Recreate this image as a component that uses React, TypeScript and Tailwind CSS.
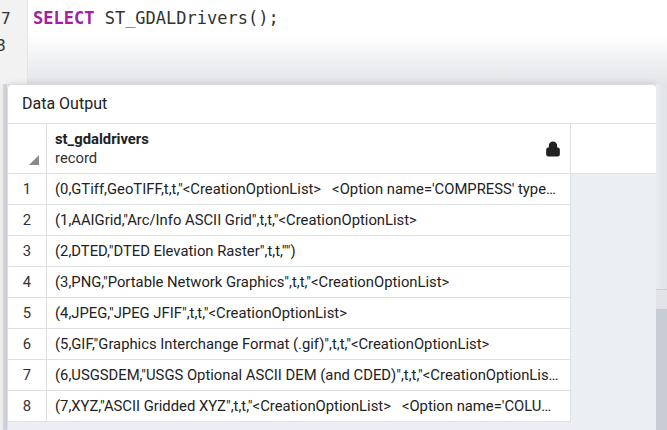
import { Lock } from 'lucide-react';

const rows = [
  `(0,GTiff,GeoTIFF,t,t,"<CreationOptionList>   <Option name='COMPRESS' type…`,
  `(1,AAIGrid,"Arc/Info ASCII Grid",t,t,"<CreationOptionList>`,
  `(2,DTED,"DTED Elevation Raster",t,t,"")`,
  `(3,PNG,"Portable Network Graphics",t,t,"<CreationOptionList>`,
  `(4,JPEG,"JPEG JFIF",t,t,"<CreationOptionList>`,
  `(5,GIF,"Graphics Interchange Format (.gif)",t,t,"<CreationOptionList>`,
  `(6,USGSDEM,"USGS Optional ASCII DEM (and CDED)",t,t,"<CreationOptionLis…`,
  `(7,XYZ,"ASCII Gridded XYZ",t,t,"<CreationOptionList>   <Option name='COLU…`,
];

function Editor() {
  return (
    <div className="flex h-[84px] bg-gradient-to-b from-white from-40% to-[#e3e5e9]">
      <div className="w-[28px] shrink-0 overflow-hidden border-r border-[#e2e2e2] bg-[#f2f2f2] pt-[5px] font-['DejaVu_Sans_Mono',monospace] text-[16px] leading-[27px] text-[#333]">
        <div className="ml-[1px]">7</div>
        <div className="-ml-[4px]">8</div>
      </div>
      <div className="pl-[5px] pt-[5px] font-['DejaVu_Sans_Mono',monospace] text-[17px] leading-[27px] text-[#333]">
        <span className="font-bold text-[#a0209f]">SELECT</span> ST_GDALDrivers();
      </div>
    </div>
  );
}

export default function App() {
  return (
    <div className="h-[430px] w-[667px] overflow-hidden bg-[#e9ebef] font-['Roboto',sans-serif]">
      <Editor />
      <div className="flex h-[346px]">
        <div className="flex w-[8px] shrink-0 bg-[#eeeeee]">
          <div className="ml-[3px] h-full w-[4px] bg-[#d3d6dc]" />
        </div>
        <div className="flex w-[648px] shrink-0 flex-col overflow-hidden rounded-t-[4px] border-t border-[#d8dbe0] bg-white shadow-[0_0_6px_rgba(0,0,0,0.15)]">
          <div className="flex h-[39px] shrink-0 items-center border-b border-[#dde0e5] px-[14px] text-[16px] text-[#222]">
            Data Output
          </div>
          <div className="flex flex-1 flex-col bg-[#ebeef3]">
            <div className="flex h-[50px] shrink-0 border-b border-[#dde0e5] bg-white">
              <div className="relative w-[39px] shrink-0 border-r border-[#dde0e5]">
                <svg className="absolute bottom-[8px] right-[7px]" width="10" height="10" viewBox="0 0 10 10">
                  <polygon points="10,0 10,10 0,10" fill="#8a8a8a" />
                </svg>
              </div>
              <div className="flex w-[524px] shrink-0 items-center justify-between border-r border-[#dde0e5] pl-[8px] pr-[9px]">
                <div className="text-[14.8px] leading-[19px] text-[#222]">
                  <div className="font-bold">st_gdaldrivers</div>
                  <div className="text-[#333]">record</div>
                </div>
                <Lock size={16} strokeWidth={2.6} className="fill-[#222] text-[#222]" />
              </div>
            </div>
            {rows.map((text, i) => (
              <div key={i} className="flex h-[31px] shrink-0">
                <div className="flex w-[39px] shrink-0 items-center justify-center border-b border-r border-[#dde0e5] bg-white text-[14.8px] text-[#333]">
                  {i + 1}
                </div>
                <div className="flex w-[524px] shrink-0 items-center overflow-hidden border-b border-r border-[#dde0e5] bg-white pl-[8px] pr-[6px] text-[14.8px] text-[#222]">
                  <span className="truncate whitespace-pre">{text}</span>
                </div>
              </div>
            ))}
          </div>
        </div>
        <div className="flex w-[11px] shrink-0 flex-col bg-[#e2e4e9]">
          <div className="h-[205px] bg-gradient-to-r from-[#e9ebef] to-[#dfe2e7]" />
          <div className="h-[20px] border-t border-[#c9ccd3] bg-[#e1e3e8]" />
          <div className="flex-1 bg-[#c8ccd5]" />
        </div>
      </div>
    </div>
  );
}
